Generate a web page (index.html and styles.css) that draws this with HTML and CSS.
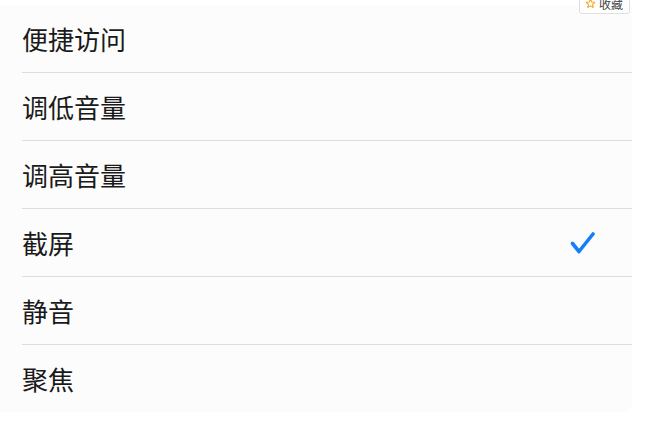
FILE: index.html
```html
<!DOCTYPE html>
<html lang="zh-CN">
<head>
    <meta charset="UTF-8">
    <meta name="viewport" content="width=device-width, initial-scale=1.0">
    <title>按键设置</title>
    <link rel="stylesheet" href="styles.css">
</head>
<body>
    <button class="fav">
        <svg width="11" height="11" viewBox="0 0 24 24"><path d="M12 2.5l2.9 6.2 6.6.7-5 4.5 1.4 6.6L12 17.2l-5.9 3.3 1.4-6.6-5-4.5 6.6-.7z" fill="none" stroke="#f5a623" stroke-width="2.4" stroke-linejoin="round"/></svg>
        收藏
    </button>
    <ul class="options">
        <li class="option">便捷访问</li>
        <li class="option">调低音量</li>
        <li class="option">调高音量</li>
        <li class="option selected">截屏
            <svg class="check" width="26" height="24" viewBox="0 0 26 24"><path d="M2.5 12.5l6.5 8L23 3" fill="none" stroke="#157efb" stroke-width="3.6" stroke-linecap="round" stroke-linejoin="round"/></svg>
        </li>
        <li class="option">静音</li>
        <li class="option">聚焦</li>
    </ul>
</body>
</html>
```

FILE: styles.css
```css
body {
    margin: 0;
    background-color: #ffffff;
    font-family: "Noto Sans CJK SC", "Noto Sans", sans-serif;
    color: #1a1a1a;
}
.options {
    list-style: none;
    margin: 5px 0 0 0;
    padding: 0;
    width: 632px;
    background-color: #fcfcfc;
    border-bottom-right-radius: 10px;
}
.option {
    margin-left: 22px;
    height: 67px;
    border-bottom: 1px solid #dcdcdc;
    display: flex;
    align-items: center;
    justify-content: space-between;
    font-size: 26px;
}
.option:last-child {
    border-bottom: none;
    height: 67px;
}
.check {
    margin-right: 36px;
}
.fav {
    position: absolute;
    top: -8px;
    left: 579px;
    height: 22px;
    padding: 0 6px 0 5px;
    display: flex;
    align-items: center;
    gap: 3px;
    background-color: #ffffff;
    border: 1px solid #e0e0e0;
    border-radius: 3px;
    font-family: "Noto Sans CJK SC", sans-serif;
    font-size: 12px;
    color: #444;
}
```
